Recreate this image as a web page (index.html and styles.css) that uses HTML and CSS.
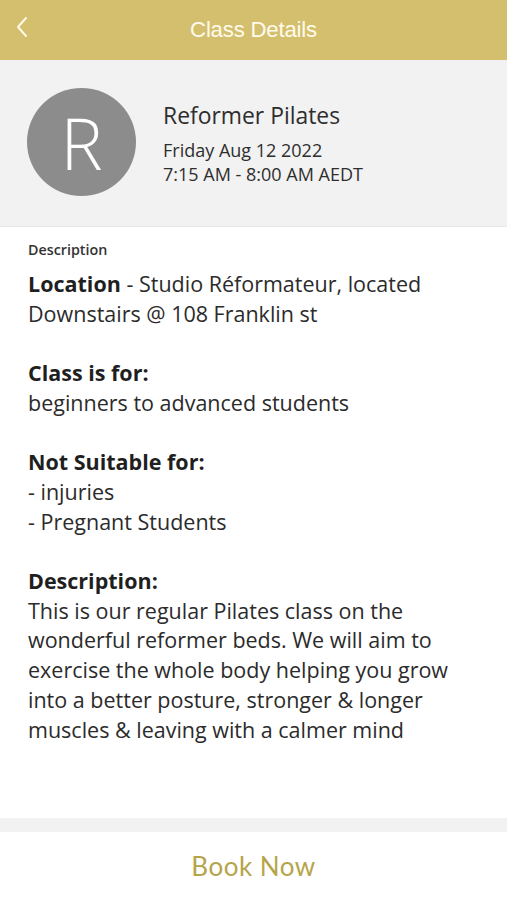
FILE: index.html
```html
<!DOCTYPE html>
<html>
<head>
<meta charset="utf-8">
<link rel="stylesheet" href="styles.css">
</head>
<body>
<div class="screen">
  <header class="topbar">
    <svg class="back" width="14" height="22" viewBox="0 0 14 22"><path d="M11 2 L3 11 L11 20" fill="none" stroke="#fffbe8" stroke-width="2" stroke-linecap="round" stroke-linejoin="round"/></svg>
    <h1 class="title">Class Details</h1>
  </header>
  <section class="summary">
    <div class="avatar">R</div>
    <div class="info">
      <div class="name">Reformer Pilates</div>
      <div class="meta">Friday Aug 12 2022</div>
      <div class="meta">7:15 AM - 8:00 AM AEDT</div>
    </div>
  </section>
  <main class="content">
    <div class="label">Description</div>
    <div class="body">
      <p><b>Location</b> - Studio Réformateur, located Downstairs @ 108 Franklin st</p>
      <p><b>Class is for:</b><br>beginners to advanced students</p>
      <p><b>Not Suitable for:</b><br>- injuries<br>- Pregnant Students</p>
      <p><b>Description:</b><br>This is our regular Pilates class on the wonderful reformer beds. We will aim to exercise the whole body helping you grow into a better posture, stronger &amp; longer muscles &amp; leaving with a calmer mind</p>
    </div>
  </main>
  <div class="band"></div>
  <footer class="footer">
    <button class="book">Book Now</button>
  </footer>
</div>
</body>
</html>
```
FILE: styles.css
```css
* { box-sizing: border-box; }
html, body { margin: 0; padding: 0; background: #fff; }
.screen {
  width: 507px;
  height: 900px;
  display: flex;
  flex-direction: column;
  font-family: "Open Sans", sans-serif;
  color: #2b2b2b;
}
.topbar {
  position: relative;
  height: 60px;
  background: #d3bf6e;
  display: flex;
  align-items: center;
  justify-content: center;
  flex-shrink: 0;
}
.back { position: absolute; left: 15px; top: 16px; }
.title {
  margin: 0;
  font-family: "Liberation Sans", Arial, sans-serif;
  font-weight: normal;
  font-size: 22.2px;
  color: #fffbea;
  letter-spacing: -0.2px;
}
.summary {
  height: 167px;
  background: #f2f2f2;
  border-bottom: 1px solid #e6e6e6;
  display: flex;
  align-items: center;
  padding-left: 27px;
  padding-bottom: 2px;
  flex-shrink: 0;
}
.avatar {
  width: 109px;
  height: 108px;
  border-radius: 50%;
  background: #8c8c8c;
  color: #fff;
  font-family: "Open Sans", sans-serif;
  font-weight: 300;
  font-size: 71px;
  line-height: 1;
  display: flex;
  align-items: center;
  justify-content: center;
  flex-shrink: 0;
}
.info { margin-left: 27px; margin-top: 2px; }
.name { font-size: 22.9px; color: #2e2e2e; line-height: 30px; margin-bottom: 7px; }
.meta { font-size: 18px; color: #2e2e2e; line-height: 24px; }
.content {
  flex: 1;
  padding: 14px 28px 0 28px;
}
.label { font-size: 14.3px; font-weight: 600; color: #333; line-height: 18px; }
.body { margin-top: 10px; font-size: 21.5px; line-height: 29.7px; color: #2b2b2b; }
.body p { margin: 0 0 29.7px 0; }
.body b { font-weight: 700; color: #1f1f1f; }
.band { height: 14px; background: #f2f2f2; flex-shrink: 0; }
.footer {
  height: 68px;
  display: flex;
  align-items: center;
  justify-content: center;
  flex-shrink: 0;
  background: #fff;
}
.book {
  border: 0;
  background: none;
  font-family: "Lato", sans-serif;
  font-size: 26px;
  letter-spacing: 0.5px;
  color: #b6a44a;
  padding: 0;
  margin-top: -1px;
}
```
